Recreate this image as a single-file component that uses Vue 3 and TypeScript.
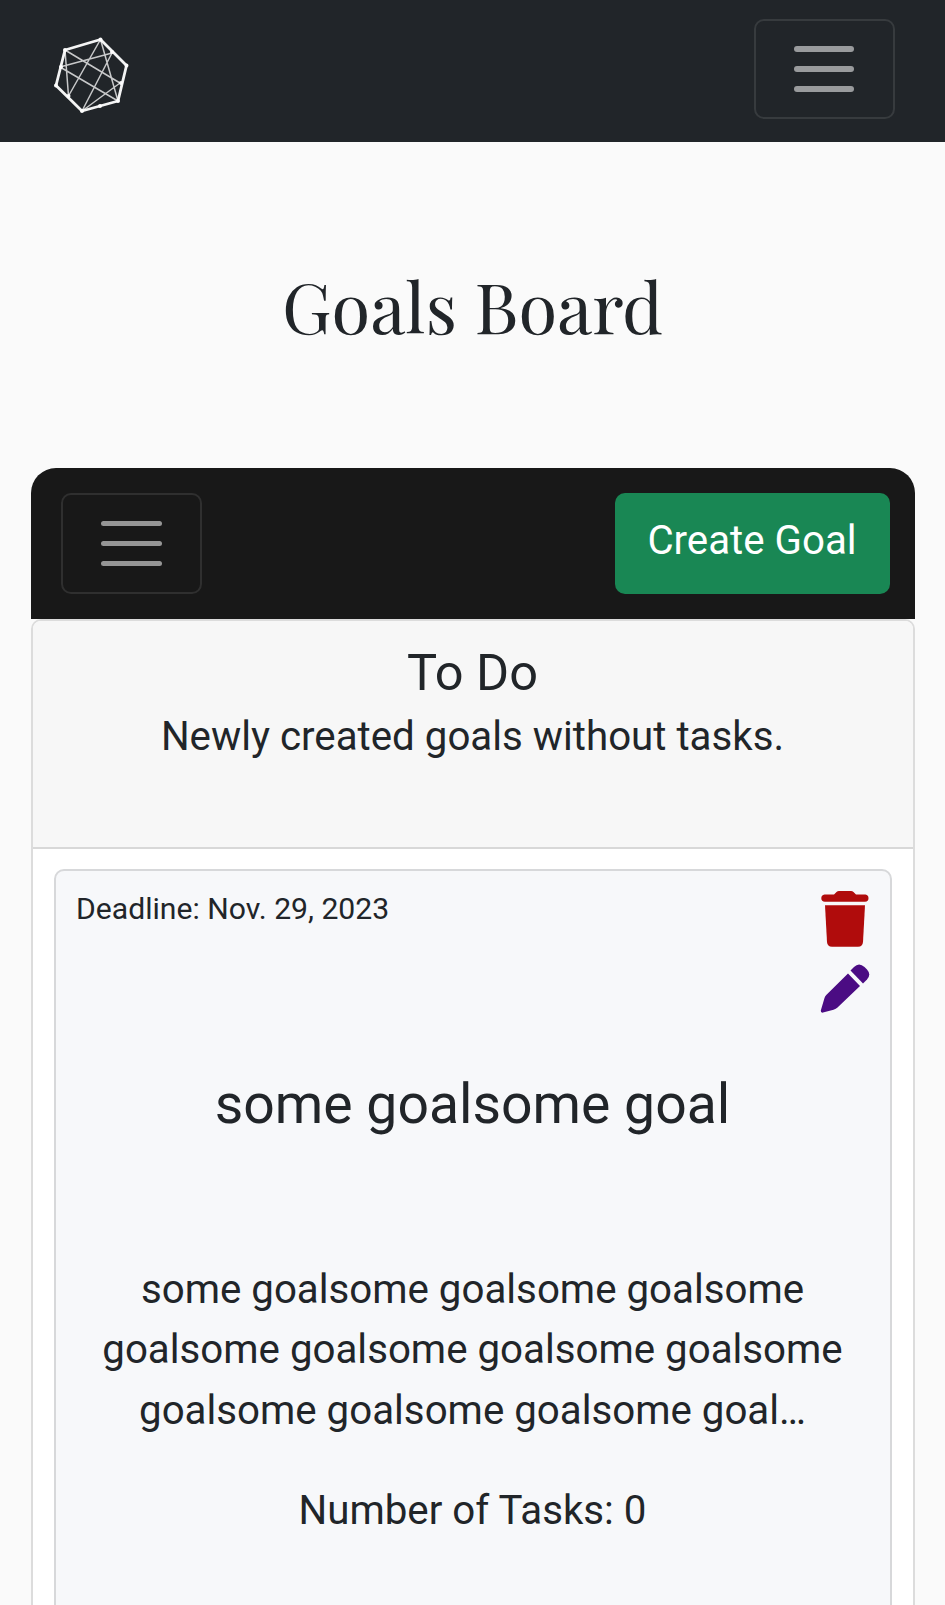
<script setup lang="ts">
interface Goal {
  deadline: string
  title: string
  lines: string[]
  tasks: number
}

const goal: Goal = {
  deadline: 'Nov. 29, 2023',
  title: 'some goalsome goal',
  lines: [
    'some goalsome goalsome goalsome',
    'goalsome goalsome goalsome goalsome',
    'goalsome goalsome goalsome goal…',
  ],
  tasks: 0,
}
</script>

<template>
  <div class="page">
    <header class="navbar">
      <svg class="logo" viewBox="0 0 100 100" fill="none" stroke="#fff">
        <path stroke-width="1.5" opacity=".75" d="M25 25 28.500 71M25 25 80 58M20 42 72 28M60.500 14.500 28.500 71M60.500 14.500 78 76M20 42 78 76M72 28 42 86M80 58 42 86" />
        <path stroke-width="2.8" stroke-linejoin="round" opacity=".95" d="M25 25 60.500 14.500 86.500 40.500 78 76 42 86 16 60.500Z" />
        <path stroke-width="4" stroke-linecap="round" opacity=".95" d="M25 25h0M60.500 14.500h0M86.500 40.500h0M78 76h0M42 86h0M16 60.500h0M21 42h0M28.500 71h0M72 27h0M60 81h0M81 58h0" />
      </svg>
      <button class="toggler" aria-label="Menu"><span class="bars"><i /><i /><i /></span></button>
    </header>
    <h1 class="title">Goals Board</h1>
    <main class="board">
      <div class="toolbar">
        <button class="toggler" aria-label="Board menu"><span class="bars"><i /><i /><i /></span></button>
        <button class="create">Create Goal</button>
      </div>
      <section class="column">
        <div class="column-head">
          <h2>To Do</h2>
          <p>Newly created goals without tasks.</p>
        </div>
        <div class="column-body">
          <article class="card">
            <div class="card-top">
              <span class="deadline">Deadline: {{ goal.deadline }}</span>
              <div class="actions">
                <svg width="48" height="56" viewBox="0 0 48 56" fill="#b00c0c">
                  <path d="M3.500 3.500H13L15.500 1Q16.500 0 18 0H30Q31.500 0 32.500 1L35 3.500H44.500Q47.500 4 47.500 7.200T44 10.700H4Q.3 10.400.3 7.200T3.500 3.500Z" />
                  <path d="M4 14.300H44L42 51Q41.600 55.800 37 55.800H11Q6.400 55.800 6 51Z" />
                </svg>
                <svg width="50" height="49" viewBox="0 0 50 49" fill="#4b0c83">
                  <path d="M30.500 6.500 34 3Q39-2 44.500 3L47 5.500Q51.500 10.500 47 15.500L43 19.500Z" />
                  <path d="M28 9.500 40 22 17.500 43.500Q16 45 13.500 45.700L3 48.600Q.5 49 .8 46.500L4.500 34Q5 32.300 6.500 30.800Z" />
                </svg>
              </div>
            </div>
            <h3>{{ goal.title }}</h3>
            <p class="description"><span v-for="(line, i) in goal.lines" :key="i">{{ line }}</span></p>
            <p class="tasks">Number of Tasks: {{ goal.tasks }}</p>
          </article>
        </div>
      </section>
    </main>
  </div>
</template>

<style>
body { background: #fafafa; overflow: hidden; }
</style>

<style scoped>
.page, .page * { box-sizing: border-box; }
.page {
  height: 1605px;
  overflow: hidden;
  background: #fafafa;
  color: #212529;
  font: 40.25px/60.6px Roboto, sans-serif;
}
h1, h2, h3, p { margin: 0; font-weight: 400; }
button { font: inherit; }
.navbar {
  display: flex;
  justify-content: space-between;
  align-items: flex-start;
  height: 142px;
  padding: 19px 50.5px 0 40px;
  background: #212529;
}
.logo { width: 100px; height: 100px; margin-top: 6px; }
.toggler {
  display: flex;
  align-items: center;
  justify-content: center;
  width: 141px;
  height: 100px;
  padding: 0;
  border: 2px solid #373b3e;
  border-radius: 10px;
  background: none;
}
.toolbar .toggler { height: 101px; border-color: #2f2f2f; }
.bars { display: flex; flex-direction: column; gap: 14.500px; width: 60.500px; }
.bars i { height: 5.600px; border-radius: 3px; background: #999b9d; }
.toolbar .bars i { background: #959595; }
.title {
  height: 325.500px;
  padding-top: 118px;
  text-align: center;
  font: 70.5px/90px "Playfair Display", "Liberation Serif", serif;
}
.board { margin: 0 30.500px; }
.toolbar {
  display: flex;
  justify-content: space-between;
  height: 151px;
  padding: 25.500px 25px 0 30.500px;
  border-radius: 25px 25px 0 0;
  background: #181818;
}
.create {
  width: 275px;
  height: 101px;
  padding: 0 0 5px;
  border: 0;
  border-radius: 10px;
  background: #198754;
  color: #fff;
}
.column {
  height: 1100px;
  border: 2px solid #dcdcdc;
  border-radius: 10px;
  background: #fff;
}
.column-head {
  height: 228px;
  padding-top: 21px;
  border-bottom: 2px solid #d8d8d8;
  border-radius: 8px 8px 0 0;
  background: #f7f7f7;
  text-align: center;
}
.column-head h2 { margin-bottom: 4px; font-size: 50.500px; line-height: 61px; }
.column-body { padding: 20px 21px 0; }
.card {
  height: 900px;
  border: 2px solid #d7d8da;
  border-radius: 10px;
  background: #f7f8fa;
  text-align: center;
}
.card-top { display: flex; justify-content: space-between; height: 201px; padding: 20px 20px 0 20.500px; }
.deadline { font-size: 30.15px; line-height: 36px; }
.actions { display: flex; flex-direction: column; align-items: center; gap: 17px; }
h3 { font-size: 55.3px; line-height: 66px; }
.description { padding-top: 122px; }
.description span { display: block; white-space: nowrap; }
.tasks { padding-top: 40px; }
</style>
